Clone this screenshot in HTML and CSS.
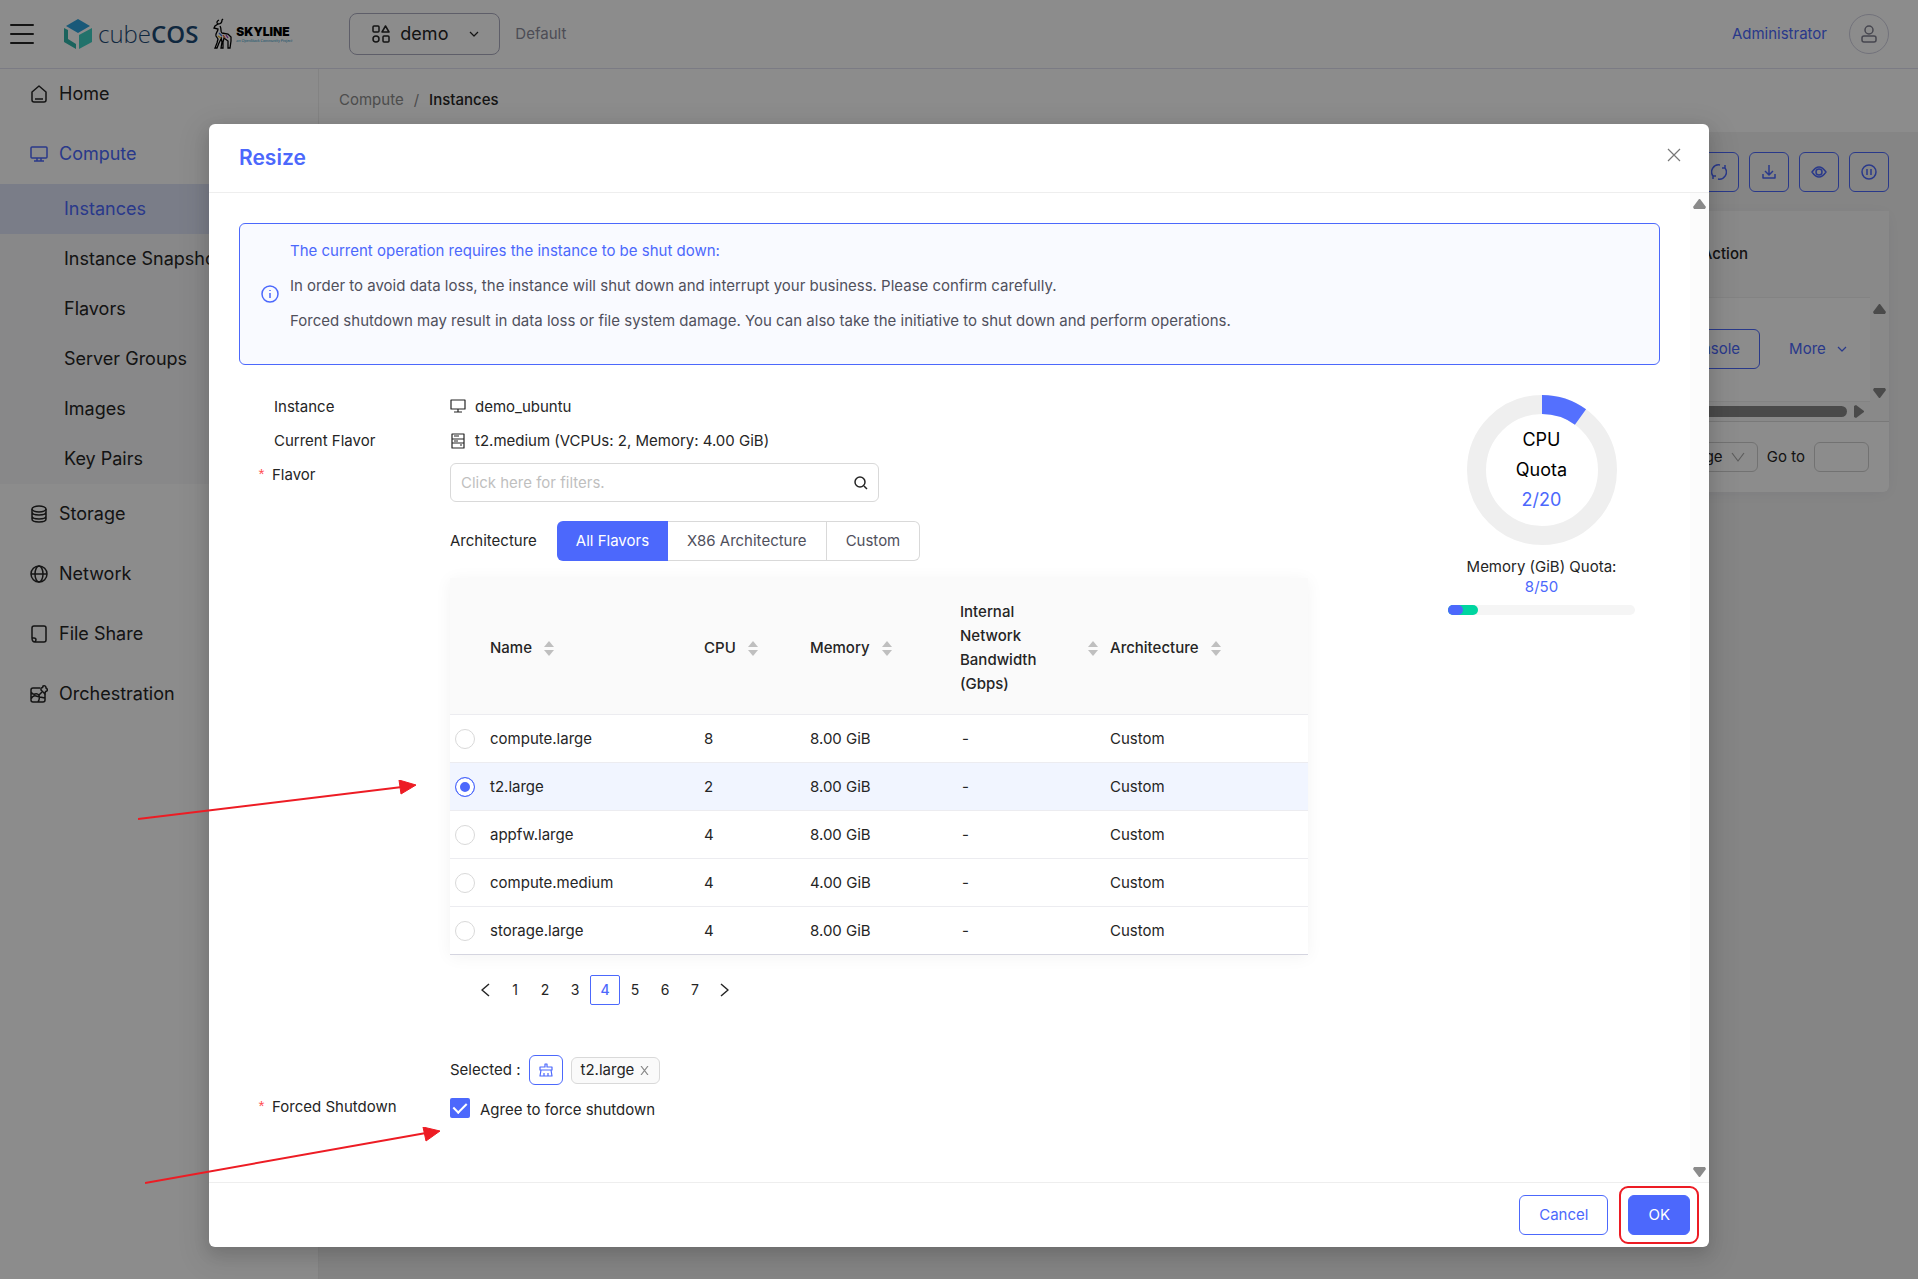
FILE: index.html
```html
<!DOCTYPE html>
<html lang="en">

<head>
    <meta charset="UTF-8">
    <meta name="viewport" content="width=device-width, initial-scale=1.0">
    <title>Instances - cubeCOS</title>
    <link rel="stylesheet" href="styles.css">
</head>

<body>
    <header class="header">
        <button class="menu-btn" aria-label="Toggle menu">
            <svg width="24" height="24" viewBox="0 0 24 24" class="line thick"><path d="M1 3h22M1 12h22M1 21h22" /></svg>
        </button>
        <a href="#" class="logo">
            <svg width="28" height="32" viewBox="0 0 28 32">
                <path fill="#2fa3dc" d="M14 1l12 7-12 7-12-7z" />
                <path fill="#30b5aa" d="M0 10l4 2v9l8 5v5L0 24z" />
                <path fill="#3ed0c3" d="M28 10v14l-13 7V17z" />
            </svg>
            <span class="logo-text">cube<b>COS</b></span>
        </a>
        <a href="#" class="skyline">
            <svg width="20" height="32" viewBox="0 0 20 32" fill="none" stroke="#000" stroke-width="1.3">
                <path d="M5 6C3 5 4 3 6 2M5 6c3 0 4-2 4-4l1-1M5 6L2 8 1 10l4 1c0 3-3 4-2 7l2 3-1 4-2 5h2l2-5 2-4M7 8c2 3 0 6 2 7l6 1 3 3v4l-1 7h-2l0-7-4-3-1 4 0 6H8l1-6-1-5" />
                <path stroke="#3a6fd8" d="M6 15l3 3" />
                <path stroke="#e2582b" d="M10 17l2 3" />
                <path stroke="#9b35b0" d="M13 17l2 3" />
                <path stroke="#e5b320" d="M5 18l3 2" />
            </svg>
            <span class="skyline-text"><strong>SKYLINE</strong><em>an OpenStack Community Project</em></span>
        </a>
        <button class="project">
            <svg width="18" height="18" viewBox="0 0 18 18" class="line"><rect x="1" y="1" width="6" height="6" rx="1" /><path d="M13.500 1l3.500 6h-7z" /><circle cx="4" cy="14" r="3" /><rect x="11" y="11" width="6" height="6" rx="1" /></svg>
            <span>demo</span>
            <svg width="10" height="10" viewBox="0 0 10 10" class="line thin"><path d="M1 3l4 4 4-4" /></svg>
        </button>
        <span class="domain">Default</span>
        <a href="#" class="user">Administrator</a>
        <button class="avatar" aria-label="Account">
            <svg width="18" height="18" viewBox="0 0 18 18" class="line"><circle cx="9" cy="5" r="4" /><path d="M2 15v-2q0-2 2-2h10q2 0 2 2v2q0 2-2 2H4q-2 0-2-2z" /></svg>
        </button>
    </header>

    <div class="layout">
        <nav class="sidebar">
            <ul class="menu">
                <li><a href="#"><svg width="18" height="18" viewBox="0 0 18 18" class="line"><path d="M2 7l7-6 7 6v8q0 2-2 2H4q-2 0-2-2zM5 14h8" /></svg>Home</a></li>
                <li class="active"><a href="#"><svg width="18" height="18" viewBox="0 0 18 18" class="line"><rect x="1" y="2" width="16" height="11" rx="1" /><path d="M7 13v3M11 13v3M4 16h10" /></svg>Compute</a></li>
                <li class="submenu">
                    <ul>
                        <li class="current"><a href="#">Instances</a></li>
                        <li><a href="#">Instance Snapshots</a></li>
                        <li><a href="#">Flavors</a></li>
                        <li><a href="#">Server Groups</a></li>
                        <li><a href="#">Images</a></li>
                        <li><a href="#">Key Pairs</a></li>
                    </ul>
                </li>
                <li><a href="#"><svg width="18" height="18" viewBox="0 0 18 18" class="line"><ellipse cx="9" cy="4" rx="7" ry="3" /><path d="M2 4v10c0 4 14 4 14 0V4M2 7c0 4 14 4 14 0M2 11c0 4 14 4 14 0" /></svg>Storage</a></li>
                <li><a href="#"><svg width="18" height="18" viewBox="0 0 18 18" class="line"><circle cx="9" cy="9" r="8" /><ellipse cx="9" cy="9" rx="4" ry="8" /><path d="M1 9h16" /></svg>Network</a></li>
                <li><a href="#"><svg width="18" height="18" viewBox="0 0 18 18" class="line"><path d="M5 17h9q2 0 2-2V3q0-2-2-2H4Q2 1 2 3v10h2q2 0 2 2zM2 13q0 4 3 4" /></svg>File Share</a></li>
                <li><a href="#"><svg width="18" height="18" viewBox="0 0 18 18" class="line"><path d="M10 3H3Q1 3 1 5v10q0 2 2 2h10q2 0 2-2V9M1 7q2 3 4 2t4 1M1 14q2-4 5-3t9 2M8 17q2-3 1-7l3-3" /><path d="M11 3q2 0 2-2 3-1 3 2 2 1 1 3-2 0-2 3l-4-4z" /></svg>Orchestration</a></li>
            </ul>
        </nav>

        <main class="content">
            <div class="breadcrumb"><a href="#">Compute</a><span>/</span><b>Instances</b></div>
            <div class="toolbar">
                <button aria-label="Refresh"><svg width="16" height="16" viewBox="0 0 16 16" class="line"><path d="M2 12A7 7 0 0 1 9 1M14 4A7 7 0 0 1 7 15M11 4h3V1M5 12H2v3" /></svg></button>
                <button aria-label="Download"><svg width="16" height="16" viewBox="0 0 16 16" class="line"><path d="M8 1v10M4 7l4 4 4-4M2 10v4h12v-4" /></svg></button>
                <button aria-label="Columns"><svg width="16" height="16" viewBox="0 0 16 16" class="line"><path d="M1 8q7-10 14 0-7 10-14 0z" /><circle cx="8" cy="8" r="3" /></svg></button>
                <button aria-label="Pause"><svg width="16" height="16" viewBox="0 0 16 16" class="line"><circle cx="8" cy="8" r="7" /><path d="M6 5v6M10 5v6" /></svg></button>
            </div>
            <section class="card">
                <table class="instances">
                    <thead>
                        <tr><th>Action</th></tr>
                    </thead>
                    <tbody>
                        <tr><td><button class="btn">Console</button><a href="#" class="more">More <svg width="10" height="10" viewBox="0 0 10 10" class="line thin"><path d="M1 3l4 4 4-4" /></svg></a></td></tr>
                    </tbody>
                </table>
                <div class="card-vbar">
                    <svg width="13" height="10" viewBox="0 0 13 10"><path d="M6 0h1l6 8-1 2H1L0 8z" /></svg>
                    <svg width="13" height="10" viewBox="0 0 13 10"><path d="M6 10h1l6-8-1-2H1L0 2z" /></svg>
                </div>
                <div class="card-hbar">
                    <span></span>
                    <svg width="10" height="13" viewBox="0 0 10 13"><path d="M10 6v1l-8 6-2-1V1l2-1z" /></svg>
                </div>
                <div class="card-foot">
                    <button class="page-size">10 / page <svg width="14" height="14" viewBox="0 0 14 14" class="line thin"><path d="M1 3l6 8 6-8" /></svg></button>
                    <label for="goto">Go to</label>
                    <input type="text" id="goto">
                </div>
            </section>
        </main>
    </div>

    <div class="mask">
        <div class="dialog" role="dialog" aria-labelledby="dialog-title">
            <div class="dialog-head">
                <h1 id="dialog-title">Resize</h1>
                <button class="close" aria-label="Close"><svg width="14" height="14" viewBox="0 0 14 14" class="line thin"><path d="M1 1l12 12M13 1L1 13" /></svg></button>
            </div>

            <div class="dialog-body">
                <div class="dialog-main">
                    <div class="alert">
                        <svg width="18" height="18" viewBox="0 0 18 18" class="line"><circle cx="9" cy="9" r="8" /><path d="M9 8v5M9 5v1" /></svg>
                        <div>
                            <p class="alert-title">The current operation requires the instance to be shut down:</p>
                            <p>In order to avoid data loss, the instance will shut down and interrupt your business. Please confirm carefully.</p>
                            <p>Forced shutdown may result in data loss or file system damage. You can also take the initiative to shut down and perform operations.</p>
                        </div>
                    </div>

                    <div class="columns">
                        <form class="form" id="resize-form">
                            <div class="row">
                                <span class="label">Instance</span>
                                <div class="value">
                                    <svg width="16" height="16" viewBox="0 0 16 16" class="line thin"><path d="M1 1h14v9H1zM8 10v3M4 13h8" /></svg>
                                    demo_ubuntu
                                </div>
                            </div>
                            <div class="row">
                                <span class="label">Current Flavor</span>
                                <div class="value">
                                    <svg width="16" height="16" viewBox="0 0 16 16" class="line thin"><path d="M2 1h12v14H2zM2 6h12M2 10h12M4 3h5M4 8h4M10 12h2" /></svg>
                                    t2.medium (VCPUs: 2, Memory: 4.00 GiB)
                                </div>
                            </div>
                            <div class="row">
                                <label class="label required" for="filter">Flavor</label>
                                <div class="field">
                                    <div class="search">
                                        <input type="text" id="filter" placeholder="Click here for filters.">
                                        <svg width="14" height="14" viewBox="0 0 14 14" class="line"><circle cx="6" cy="6" r="5" /><path d="M10 10l3 3" /></svg>
                                    </div>
                                    <div class="tabs">
                                        <span>Architecture</span>
                                        <div class="tab-group">
                                            <button type="button" class="on">All Flavors</button>
                                            <button type="button">X86 Architecture</button>
                                            <button type="button">Custom</button>
                                        </div>
                                    </div>

                                    <table class="flavors">
                                        <colgroup>
                                            <col class="c-radio">
                                            <col class="c-name">
                                            <col class="c-cpu">
                                            <col class="c-memory">
                                            <col class="c-net">
                                            <col>
                                        </colgroup>
                                        <thead>
                                            <tr>
                                                <th></th>
                                                <th><span class="sort">Name <i></i></span></th>
                                                <th><span class="sort">CPU <i></i></span></th>
                                                <th><span class="sort">Memory <i></i></span></th>
                                                <th><span class="sort wide"><span>Internal Network Bandwidth (Gbps)</span> <i></i></span></th>
                                                <th><span class="sort">Architecture <i></i></span></th>
                                            </tr>
                                        </thead>
                                        <tbody>
                                            <tr>
                                                <td><input type="radio" name="flavor" id="f1"></td>
                                                <td><label for="f1">compute.large</label></td>
                                                <td>8</td>
                                                <td>8.00 GiB</td>
                                                <td class="dash">-</td>
                                                <td>Custom</td>
                                            </tr>
                                            <tr class="selected">
                                                <td><input type="radio" name="flavor" id="f2" checked></td>
                                                <td><label for="f2">t2.large</label></td>
                                                <td>2</td>
                                                <td>8.00 GiB</td>
                                                <td class="dash">-</td>
                                                <td>Custom</td>
                                            </tr>
                                            <tr>
                                                <td><input type="radio" name="flavor" id="f3"></td>
                                                <td><label for="f3">appfw.large</label></td>
                                                <td>4</td>
                                                <td>8.00 GiB</td>
                                                <td class="dash">-</td>
                                                <td>Custom</td>
                                            </tr>
                                            <tr>
                                                <td><input type="radio" name="flavor" id="f4"></td>
                                                <td><label for="f4">compute.medium</label></td>
                                                <td>4</td>
                                                <td>4.00 GiB</td>
                                                <td class="dash">-</td>
                                                <td>Custom</td>
                                            </tr>
                                            <tr>
                                                <td><input type="radio" name="flavor" id="f5"></td>
                                                <td><label for="f5">storage.large</label></td>
                                                <td>4</td>
                                                <td>8.00 GiB</td>
                                                <td class="dash">-</td>
                                                <td>Custom</td>
                                            </tr>
                                        </tbody>
                                    </table>

                                    <div class="pages">
                                        <button type="button" aria-label="Previous"><svg width="10" height="14" viewBox="0 0 10 14" class="line"><path d="M9 1L2 7l7 6" /></svg></button>
                                        <button type="button">1</button>
                                        <button type="button">2</button>
                                        <button type="button">3</button>
                                        <button type="button" class="on">4</button>
                                        <button type="button">5</button>
                                        <button type="button">6</button>
                                        <button type="button">7</button>
                                        <button type="button" aria-label="Next"><svg width="10" height="14" viewBox="0 0 10 14" class="line"><path d="M1 1l7 6-7 6" /></svg></button>
                                    </div>

                                    <div class="chosen">
                                        <span>Selected :</span>
                                        <button type="button" class="clear" aria-label="Clear"><svg width="14" height="14" viewBox="0 0 14 14" class="line thin"><path d="M6 4V1h2v3h5v3H1V4zM2 7l-1 6h12l-1-6M5 13v-3M9 13v-3" /></svg></button>
                                        <span class="tag">t2.large <svg width="9" height="9" viewBox="0 0 9 9" class="line thin"><path d="M1 0l7 9M8 0L1 9" /></svg></span>
                                    </div>
                                </div>
                            </div>
                            <div class="row">
                                <span class="label required">Forced Shutdown</span>
                                <label class="agree"><input type="checkbox" checked>Agree to force shutdown</label>
                            </div>
                        </form>

                        <aside class="quota">
                            <div class="ring">
                                <svg width="150" height="150" viewBox="0 0 150 150">
                                    <circle cx="75" cy="75" r="65.500" fill="none" stroke="#efefef" stroke-width="19" />
                                    <circle cx="75" cy="75" r="65.500" fill="none" stroke="#5470fe" stroke-width="19" pathLength="100" stroke-dasharray="10 90" transform="rotate(-90 75 75)" />
                                </svg>
                                <p>CPU<br>Quota<br><b>2/20</b></p>
                            </div>
                            <p class="memory">Memory (GiB) Quota:<br><b>8/50</b></p>
                            <div class="bar"><span class="bar-new"><span class="bar-used"></span></span></div>
                        </aside>
                    </div>
                </div>
                <div class="scrollbar">
                    <svg width="13" height="10" viewBox="0 0 13 10"><path d="M6 0h1l6 8-1 2H1L0 8z" /></svg>
                    <svg width="13" height="10" viewBox="0 0 13 10"><path d="M6 10h1l6-8-1-2H1L0 2z" /></svg>
                </div>
            </div>

            <div class="dialog-foot">
                <button class="btn">Cancel</button>
                <div class="highlight"><button class="btn primary" type="submit" form="resize-form">OK</button></div>
            </div>
        </div>
    </div>

    <!-- step markers -->
    <svg class="arrow arrow-row" width="279" height="42" viewBox="0 0 279 42"><path d="M0 39L264 7" /><polygon points="278,5 261,0 263,14" /></svg>
    <svg class="arrow arrow-agree" width="295" height="60" viewBox="0 0 295 60"><path d="M0 56L281 6" /><polygon points="295,4 278,0 281,14" /></svg>
</body>

</html>
```
FILE: styles.css
```css
* {
    margin: 0;
    padding: 0;
    box-sizing: border-box;
}

body {
    min-height: 100vh;
    display: flex;
    flex-direction: column;
    font-family: Inter, "Liberation Sans", sans-serif;
    font-size: 15px;
    line-height: 24px;
    color: #252525;
    background-color: #fff;
}

button,
input {
    font: inherit;
    color: inherit;
    background: none;
    border: none;
}

a {
    color: inherit;
    text-decoration: none;
}

ul {
    list-style: none;
}

svg {
    flex: none;
}

.line {
    fill: none;
    stroke: currentColor;
    stroke-width: 1.5;
    stroke-linejoin: round;
}

.thin {
    stroke-width: 1.2;
}

.thick {
    stroke-width: 2;
    stroke-linecap: round;
}

/* header */
.header {
    height: 69px;
    display: flex;
    align-items: center;
    padding: 0 29px 0 10px;
    border-bottom: 1px solid #e0e0f0;
}

.menu-btn,
.logo,
.skyline {
    display: flex;
    align-items: center;
}

.logo {
    gap: 6px;
    margin-left: 30px;
}

.logo-text {
    font-family: "Open Sans", sans-serif;
    font-size: 24px;
    font-weight: 300;
    color: #1d4a74;
}

.logo-text b {
    font-weight: 600;
}

.skyline {
    gap: 3px;
    margin-left: 15px;
    width: 94px;
}

.skyline-text {
    display: flex;
    flex-direction: column;
    white-space: nowrap;
}

.skyline-text strong {
    font-size: 12px;
    line-height: 12px;
    font-weight: 900;
    color: #000;
}

.skyline-text em {
    font-family: Lato, sans-serif;
    font-size: 4px;
    line-height: 5px;
    color: #2f9bc9;
}

.project {
    width: 151px;
    height: 42px;
    margin-left: 42px;
    padding: 0 20px 0 22px;
    display: flex;
    align-items: center;
    gap: 10px;
    font-size: 18px;
    border: 1px solid #acacc0;
    border-radius: 8px;
}

.project span {
    flex: 1;
    text-align: left;
}

.domain {
    margin-left: 15px;
    color: #8c8c9c;
}

.user {
    margin-left: auto;
    color: #4c68fc;
}

.avatar {
    width: 40px;
    height: 40px;
    margin-left: 22px;
    display: grid;
    place-items: center;
    color: #808090;
    border: 1px solid #d0d0e0;
    border-radius: 50%;
}

.layout {
    flex: 1;
    display: flex;
}

/* sidebar */
.sidebar {
    width: 319px;
    border-right: 1px solid #eee;
}

.menu {
    display: flex;
    flex-direction: column;
    font-size: 18px;
}

.menu > li {
    margin: 5px 0;
}

.menu > li:first-child {
    margin-top: 0;
}

.menu a {
    height: 50px;
    padding-left: 30px;
    display: flex;
    align-items: center;
    gap: 11px;
}

.menu > .active {
    color: #4c68fc;
}

.menu > .submenu {
    margin: 0;
    background-color: #f8f8fa;
}

.submenu a {
    padding-left: 64px;
}

.submenu .current {
    color: #4c68fc;
    background-color: #dfe4f8;
}

/* page content */
.content {
    flex: 1;
    background-color: #f3f3f3;
}

.breadcrumb {
    height: 63px;
    padding: 19px 20px;
    display: flex;
    gap: 10px;
    color: #8c8c8c;
    background-color: #fff;
}

.breadcrumb b {
    font-weight: 500;
    color: #252525;
}

.toolbar {
    padding: 20px 29px 19px;
    display: flex;
    justify-content: flex-end;
    gap: 10px;
}

.toolbar button {
    width: 40px;
    height: 40px;
    display: grid;
    place-items: center;
    color: #4c68fc;
    border: 1px solid #4c68fc;
    border-radius: 6px;
}

.card {
    margin: 0 29px 0 20px;
    display: grid;
    grid-template-columns: 1fr 19px;
    background-color: #fff;
    border-radius: 6px;
    box-shadow: 0 2px 16px rgba(0, 0, 60, 0.06);
}

.instances {
    width: 100%;
    border-collapse: collapse;
    text-align: right;
    grid-row: 1;
}

.instances th {
    height: 86px;
    padding-right: 122px;
    font-weight: 500;
    background-color: #fafafa;
    border-bottom: 1px solid #eee;
}

.instances td {
    height: 104px;
    padding-right: 23px;
    border-bottom: 1px solid #eee;
}

.more {
    margin-left: 29px;
    color: #4c68fc;
}

.more svg {
    margin-left: 7px;
}

.card-vbar {
    padding: 93px 0 4px;
    display: flex;
    flex-direction: column;
    align-items: center;
    justify-content: space-between;
    background-color: #fafafa;
    fill: #888;
}

.card-hbar {
    grid-column: 1 / 3;
    height: 20px;
    padding-right: 25px;
    display: flex;
    align-items: center;
    gap: 7px;
    background-color: #fafafa;
    border-bottom: 1px solid #ddd;
    fill: #888;
}

.card-hbar span {
    flex: 1;
    height: 11px;
    border-radius: 6px;
    background-color: #888;
}

.card-foot {
    grid-column: 1 / 3;
    padding: 20px;
    display: flex;
    justify-content: flex-end;
    align-items: center;
    gap: 9px;
}

.page-size,
.card-foot input {
    height: 30px;
    padding: 0 12px;
    border: 1px solid #d0d0d0;
    border-radius: 6px;
}

.page-size svg {
    margin-left: 4px;
    vertical-align: middle;
    color: #aaa;
}

.card-foot input {
    width: 55px;
}

/* dialog */
.mask {
    position: absolute;
    inset: 0;
    padding: 124px 24px 31px;
    background-color: rgba(0, 0, 0, 0.45);
}

.dialog {
    max-width: 1500px;
    margin: 0 auto;
    background-color: #fff;
    border-radius: 6px;
    box-shadow: 0 6px 16px rgba(0, 0, 0, 0.12), 0 9px 28px 8px rgba(0, 0, 0, 0.08);
}

.dialog-head {
    height: 69px;
    padding: 0 28px 0 30px;
    display: flex;
    align-items: center;
    justify-content: space-between;
    border-bottom: 1px solid #eee;
}

h1 {
    font-size: 21px;
    font-weight: 600;
    color: #4c68fc;
}

.close {
    display: flex;
    margin-bottom: 6px;
    color: #777;
}

.dialog-body {
    display: flex;
}

.dialog-main {
    flex: 1;
    padding: 30px 30px 60px;
}

.scrollbar {
    width: 19px;
    padding: 6px 0 5px;
    display: flex;
    flex-direction: column;
    align-items: center;
    justify-content: space-between;
    background-color: #fcfcfc;
    fill: #8a8a8a;
}

.alert {
    padding: 15px 21px 20px;
    display: flex;
    align-items: center;
    gap: 11px;
    background-color: #f9faff;
    border: 1px solid #4c68fc;
    border-radius: 6px;
    color: #50505c;
}

.alert p {
    margin-bottom: 11px;
}

.alert svg {
    margin-top: 4px;
}

.alert svg,
.alert .alert-title {
    color: #4c68fc;
}

.columns {
    margin-top: 30px;
    padding-right: 25px;
    display: grid;
    grid-template-columns: 1fr 187px;
    gap: 140px;
}

.form {
    display: flex;
    flex-direction: column;
    gap: 10px;
}

.row {
    display: flex;
}

.label {
    width: 211px;
    padding-left: 35px;
}

.required {
    padding-left: 18px;
}

.required::before {
    content: "*";
    margin-right: 6px;
    font-family: "Liberation Mono", monospace;
    color: #ff4d4f;
}

.value {
    display: flex;
    align-items: center;
    gap: 9px;
}

.field {
    flex: 1;
}

.search {
    width: 50%;
    height: 39px;
    padding: 0 10px;
    display: flex;
    align-items: center;
    border: 1px solid #d9d9d9;
    border-radius: 6px;
}

.search input {
    flex: 1;
    outline: none;
}

.search input::placeholder {
    color: #bfbfbf;
}

.tabs {
    margin: 19px 0 17px;
    display: flex;
    align-items: center;
    gap: 20px;
}

.tab-group {
    display: flex;
}

.tab-group button {
    height: 40px;
    padding: 0 19px;
    border: 1px solid #d9d9d9;
    border-left: none;
    color: #50505c;
}

.tab-group .on {
    border: none;
    border-radius: 6px 0 0 6px;
    background-color: #4c68fc;
    color: #fff;
}

.tab-group button:last-child {
    border-radius: 0 6px 6px 0;
}

.flavors {
    width: 100%;
    table-layout: fixed;
    border-collapse: collapse;
    text-align: left;
    border-bottom: 1px solid #d5d5e0;
    box-shadow: 0 2px 16px rgba(0, 0, 0, 0.05);
}

.c-radio {
    width: 32px;
}

.c-name {
    width: 214px;
}

.c-cpu {
    width: 106px;
}

.c-memory,
.c-net {
    width: 150px;
}

.flavors th {
    padding: 22px 8px 18px;
    font-weight: 500;
    background-color: #fafafa;
}

.flavors td {
    height: 48px;
    padding: 0 8px;
    border-top: 1px solid #ececf0;
}

.flavors td:first-child {
    padding: 0 5px;
}

.flavors .dash {
    padding-left: 10px;
}

.flavors .selected {
    background-color: #f1f5ff;
}

.sort {
    display: flex;
    align-items: center;
    gap: 12px;
}

.sort i {
    display: flex;
    flex-direction: column;
    gap: 3px;
}

/* sort carets */
.sort i::before,
.sort i::after {
    content: "";
    border: 5px solid transparent;
}

.sort i::before {
    border-top: none;
    border-bottom: 6px solid #bfbfbf;
}

.sort i::after {
    border-bottom: none;
    border-top: 6px solid #bfbfbf;
}

.sort.wide {
    justify-content: space-between;
    margin-right: -4px;
}

.sort.wide > span {
    width: 90px;
}

input[type=radio] {
    appearance: none;
    display: block;
    width: 20px;
    height: 20px;
    border: 1px solid #d9d9d9;
    border-radius: 50%;
    background-color: #fff;
}

input[type=radio]:checked {
    border-color: #4c68fc;
    background-color: #4c68fc;
    box-shadow: inset 0 0 0 4px #fff;
}

.pages {
    margin: 20px 0 50px;
    padding-left: 20px;
    display: flex;
}

.pages button {
    width: 30px;
    height: 30px;
    display: grid;
    place-items: center;
    border-radius: 2px;
    font-size: 14px;
}

.pages .on {
    border: 1px solid #4c68fc;
    color: #4c68fc;
    font-weight: 500;
}

.chosen {
    display: flex;
    align-items: center;
    gap: 8px;
}

.clear {
    width: 34px;
    height: 30px;
    display: grid;
    place-items: center;
    color: #4c68fc;
    border: 1px solid #4c68fc;
    border-radius: 6px;
}

.tag {
    height: 27px;
    padding: 0 10px 0 9px;
    display: flex;
    align-items: center;
    gap: 6px;
    background-color: #fafafa;
    border: 1px solid #d9d9d9;
    border-radius: 6px;
}

.tag svg {
    color: #888;
}

.agree {
    padding-top: 3px;
    display: flex;
    gap: 10px;
}

input[type=checkbox] {
    appearance: none;
    display: grid;
    place-items: center;
    width: 20px;
    height: 20px;
    border-radius: 2px;
    background-color: #4c68fc;
}

input[type=checkbox]::after {
    content: "";
    width: 6px;
    height: 11px;
    margin-bottom: 3px;
    border: solid #fff;
    border-width: 0 2px 2px 0;
    transform: rotate(45deg);
}

/* quota */
.quota {
    text-align: center;
}

.quota b {
    font-weight: 400;
    color: #4c68fc;
}

.ring {
    display: grid;
    place-items: center;
}

.ring svg,
.ring p {
    grid-area: 1 / 1;
}

.ring p {
    font-size: 18px;
    line-height: 30px;
    color: #000;
}

.memory {
    margin: 12px 0 8px;
    line-height: 20px;
}

.bar,
.bar-new,
.bar-used {
    height: 10px;
    border-radius: 5px;
}

.bar {
    background-color: #f5f5f5;
}

.bar-new,
.bar-used {
    display: block;
}

.bar-new {
    width: 16%;
    background-color: #00d5a0;
}

.bar-used {
    width: 50%;
    background-color: #4c68fc;
}

.dialog-foot {
    padding: 3px 10px 3px;
    display: flex;
    align-items: center;
    justify-content: flex-end;
    gap: 11px;
    border-top: 1px solid #eee;
}

.btn {
    height: 40px;
    padding: 0 19px;
    color: #4c68fc;
    border: 1px solid #4c68fc;
    border-radius: 6px;
}

.btn.primary {
    background-color: #4c68fc;
    color: #fff;
}

.highlight {
    padding: 7px;
    border: 2px solid #ed1c24;
    border-radius: 9px;
}

/* markers lie over the dialog */
.arrow {
    position: absolute;
    fill: #ed1c24;
    stroke: #ed1c24;
}

.arrow path {
    stroke-width: 2;
}

.arrow-row {
    left: 138px;
    top: 780px;
}

.arrow-agree {
    left: 145px;
    top: 1127px;
}
```
